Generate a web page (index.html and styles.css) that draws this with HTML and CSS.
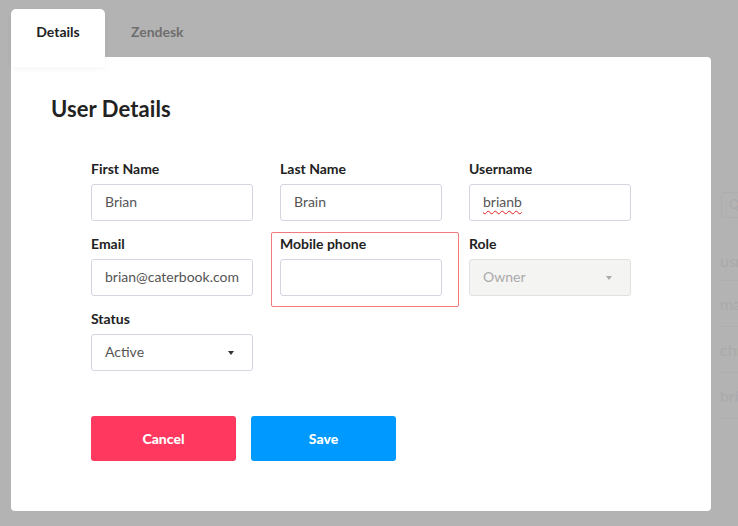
FILE: index.html
```html
<!DOCTYPE html>
<html>
<head>
<meta charset="utf-8">
<link rel="stylesheet" href="styles.css">
</head>
<body>
<div class="backdrop">
  <div class="bg-search"><span class="bg-q">Q</span></div>
  <div class="bg-head">USERNAME</div>
  <div class="bg-row">mark</div>
  <div class="bg-row">chris</div>
  <div class="bg-row">brian</div>
</div>
<div class="stage">
  <div class="tabs">
    <div class="tab active">Details</div>
    <div class="tab">Zendesk</div>
  </div>
  <div class="modal">
    <h1 class="title">User Details</h1>
    <div class="grid">
      <div class="field">
        <label class="label">First Name</label>
        <div class="input">Brian</div>
      </div>
      <div class="field">
        <label class="label">Last Name</label>
        <div class="input">Brain</div>
      </div>
      <div class="field">
        <label class="label">Username</label>
        <div class="input"><span class="spell">brianb</span></div>
      </div>
      <div class="field">
        <label class="label">Email</label>
        <div class="input">brian@caterbook.com</div>
      </div>
      <div class="field highlight">
        <label class="label">Mobile phone</label>
        <div class="input"></div>
        <div class="outline"></div>
      </div>
      <div class="field">
        <label class="label">Role</label>
        <div class="input select disabled">Owner<span class="caret"></span></div>
      </div>
      <div class="field">
        <label class="label">Status</label>
        <div class="input select">Active<span class="caret dark"></span></div>
      </div>
    </div>
    <div class="actions">
      <button class="btn cancel">Cancel</button>
      <button class="btn save">Save</button>
    </div>
  </div>
</div>
</body>
</html>
```
FILE: styles.css
```css
* { box-sizing: border-box; }
html, body { margin: 0; padding: 0; }
body {
  width: 738px;
  height: 526px;
  overflow: hidden;
  background: #b3b3b3;
  font-family: Lato, "Open Sans", sans-serif;
  position: relative;
}
.backdrop {
  position: absolute;
  left: 711px;
  top: 150px;
  width: 27px;
  height: 300px;
  overflow: hidden;
  color: #aaaaaa;
  font-size: 16px;
  white-space: nowrap;
}
.bg-search {
  position: absolute;
  left: 10px;
  top: 42px;
  width: 60px;
  height: 26px;
  border: 1px solid #adadad;
  border-radius: 3px;
}
.bg-q { position: absolute; left: 7px; top: 3px; font-size: 13px; }
.bg-head {
  position: absolute;
  left: 9px;
  top: 105px;
  font-size: 12px;
  font-weight: 700;
  padding-bottom: 10px;
  border-bottom: 1px solid #afafaf;
  width: 60px;
}
.bg-row {
  position: relative;
  left: 9px;
  width: 60px;
  height: 46px;
  line-height: 46px;
  border-bottom: 1px solid #afafaf;
}
.bg-row:nth-of-type(3) { margin-top: 131px; }
.stage {
  position: relative;
  padding: 9px 0 0 11px;
}
.tabs {
  display: flex;
  height: 48px;
}
.tab {
  padding: 0 25px 0 26px;
  height: 58px;
  line-height: 46px;
  font-size: 14px;
  font-weight: 700;
  color: #6e6e6e;
  border-radius: 5px 5px 0 0;
  position: relative;
  z-index: 1;
}
.tab.active {
  background: #fff;
  color: #222;
  width: 94px;
  padding: 0;
  text-align: center;
  box-shadow: 0 2px 6px rgba(0,0,0,0.04);
}
.modal {
  width: 700px;
  height: 454px;
  background: #fff;
  border-radius: 0 4px 4px 4px;
  padding: 38px 40px 0 40px;
}
.title {
  margin: 0;
  font-size: 22px;
  font-weight: 700;
  color: #222;
  line-height: 28px;
  letter-spacing: 0.1px;
}
.grid {
  display: grid;
  grid-template-columns: repeat(3, 162px);
  column-gap: 27px;
  row-gap: 13px;
  margin: 36px 0 0 40px;
}
.field { position: relative; }
.label {
  display: block;
  font-size: 14px;
  font-weight: 700;
  color: #222;
  line-height: 20px;
  margin-bottom: 5px;
}
.input {
  height: 37px;
  border: 1px solid #d3d5df;
  border-radius: 3px;
  padding: 0 13px;
  line-height: 33px;
  font-size: 14px;
  color: #555;
  position: relative;
  white-space: nowrap;
  overflow: hidden;
}
.spell {
  text-decoration: underline wavy #e02020;
  text-decoration-thickness: 1px;
  text-underline-offset: 3px;
}
.select.disabled {
  background: #f4f4f2;
  border-color: #e1e1df;
  color: #aaa;
}
.caret {
  position: absolute;
  right: 18px;
  top: 16px;
  width: 0;
  height: 0;
  border-left: 3.5px solid transparent;
  border-right: 3.5px solid transparent;
  border-top: 4px solid #aaa;
}
.caret.dark { border-top-color: #333; }
.outline {
  position: absolute;
  left: -9px;
  top: -2px;
  width: 188px;
  height: 75px;
  border: 1.5px solid #f27a7a;
  border-radius: 2px;
  pointer-events: none;
}
.actions {
  display: flex;
  gap: 15px;
  margin: 45px 0 0 40px;
}
.btn {
  width: 145px;
  height: 45px;
  border: 0;
  border-radius: 3px;
  color: #fff;
  font-family: Lato, "Open Sans", sans-serif;
  font-size: 14px;
  font-weight: 900;
}
.cancel { background: #ff3860; }
.save { background: #0099ff; }
```
